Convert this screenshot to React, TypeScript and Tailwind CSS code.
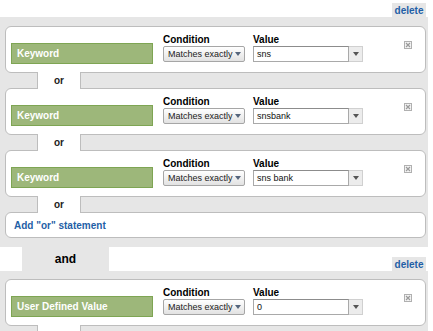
const rows = [
  { field: 'Keyword', value: 'sns' },
  { field: 'Keyword', value: 'snsbank' },
  { field: 'Keyword', value: 'sns bank' },
]

function RemoveIcon() {
  return (
    <svg width="8" height="8" viewBox="0 0 8 8" className="block">
      <rect x="0.5" y="0.5" width="7" height="7" fill="#f4f4f4" stroke="#b0b0b0" />
      <path d="M2 2 L6 6 M6 2 L2 6" stroke="#9a9a9a" strokeWidth="1.2" />
    </svg>
  )
}

function ConditionRow({ field, value }: { field: string; value: string }) {
  return (
    <div className="flex h-[47px] rounded-[6px] border border-[#bdbdbd] bg-white pl-[5px] pr-[13px]">
      {/* Field */}
      <div className="mt-[16px] flex h-[21px] w-[142px] items-center border border-[#7ea553] bg-[#9db77a] pl-[5px] text-[10px] font-bold text-white">
        {field}
      </div>

      {/* Condition */}
      <div className="ml-[10px] flex flex-col pt-[7px]">
        <span className="h-[12px] text-[10px] font-bold leading-[12px] text-black">Condition</span>
        <div className="flex h-[16px] w-[82px] items-center justify-between rounded-[2px] border border-[#a6a6a6] bg-gradient-to-b from-white to-[#e2e2e2] pl-[4px] pr-[3px]">
          <span className="whitespace-nowrap text-[9px] leading-none text-[#222]">Matches exactly</span>
          <svg width="6" height="4" viewBox="0 0 6 4" className="shrink-0">
            <path d="M0 0 H6 L3 4 Z" fill="#55657c" />
          </svg>
        </div>
      </div>

      {/* Value */}
      <div className="ml-[8px] flex flex-col pt-[7px]">
        <span className="h-[12px] text-[10px] font-bold leading-[12px] text-black">Value</span>
        <div className="flex h-[16px]">
          <div className="flex w-[96px] items-center border border-[#a9a9a9] border-t-[#8c8c8c] bg-white pl-[3px] text-[9px] leading-none text-[#111]">
            {value}
          </div>
          <div className="flex w-[14px] items-center justify-center border-y border-r border-[#d0d0d0] bg-[#ececec]">
            <svg width="6" height="4" viewBox="0 0 6 4">
              <path d="M0 0 H6 L3 4 Z" fill="#555" />
            </svg>
          </div>
        </div>
      </div>

      <div className="ml-auto mt-[14px]">
        <RemoveIcon />
      </div>
    </div>
  )
}

function OrTab({ label = 'or' }: { label?: string }) {
  return (
    <div className="relative z-10 -my-px ml-[37px] flex h-[17px] w-[44px] items-center justify-center border-x border-[#bdbdbd] bg-white text-[10px] font-bold text-[#222]">
      {label}
    </div>
  )
}

function DeleteTab() {
  return (
    <div className="mr-[2px] flex h-[14px] w-[34px] items-center justify-center bg-[#e6e6e6] text-[10px] font-bold text-[#1f5fa6]">
      delete
    </div>
  )
}

export default function App() {
  return (
    <div className="h-[331px] w-[433px] overflow-hidden bg-white" style={{ fontFamily: '"Liberation Sans", Arial, sans-serif' }}>
      <div className="w-[428px]">
        {/* First group */}
        <div className="flex h-[17px] items-end justify-end">
          <DeleteTab />
        </div>
        <div className="bg-[#e6e6e6] pb-[9px] pl-[5px] pr-[2px] pt-[9px]">
          {rows.map((r, i) => (
            <div key={i}>
              <div className="-ml-[5px]">
                {i > 0 && <OrTab />}
              </div>
              <ConditionRow field={r.field} value={r.value} />
            </div>
          ))}
          <div className="-ml-[5px]">
            <OrTab />
          </div>
          <div className="flex h-[26px] items-center rounded-[6px] border border-[#bdbdbd] bg-white pl-[8px] text-[10px] font-bold text-[#1f5fa6]">
            Add "or" statement
          </div>
        </div>

        {/* and */}
        <div className="flex h-[24px] items-end">
          <div className="ml-[22px] flex h-full w-[87px] items-center justify-center bg-[#e6e6e6] text-[12px] font-bold text-black">
            and
          </div>
          <div className="ml-auto">
            <DeleteTab />
          </div>
        </div>

        {/* Second group */}
        <div className="bg-[#e6e6e6] pl-[5px] pr-[2px] pt-[8px]">
          <ConditionRow field="User Defined Value" value="0" />
          <div className="-ml-[5px]">
            <OrTab />
          </div>
        </div>
      </div>
    </div>
  )
}
